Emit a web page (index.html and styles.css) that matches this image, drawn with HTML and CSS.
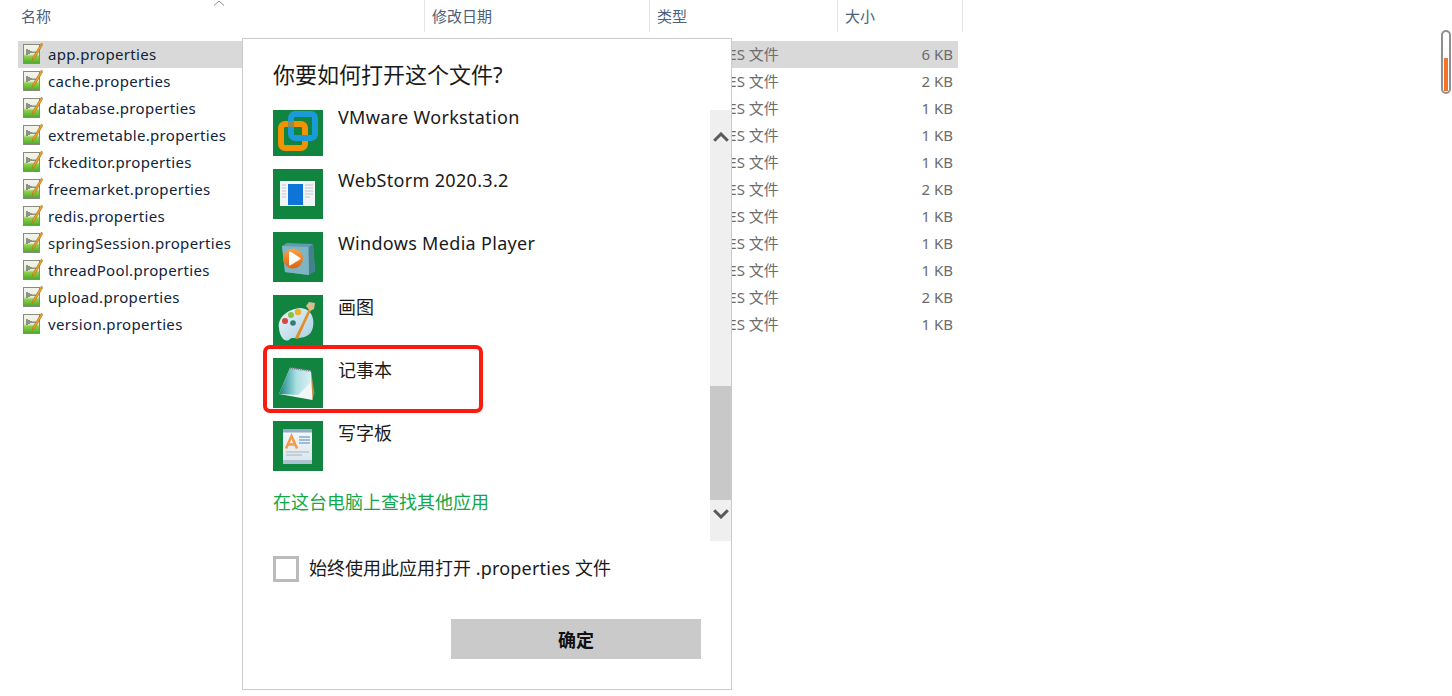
FILE: index.html
```html
<!DOCTYPE html>
<html lang="zh-CN">
<head>
<meta charset="utf-8">
<title>你要如何打开这个文件?</title>
<link rel="stylesheet" href="styles.css">
</head>
<body>
<svg class="defs" width="0" height="0" aria-hidden="true">
  <defs>
    <linearGradient id="pg" x1="0" y1="0" x2="0" y2="1">
      <stop offset="0" stop-color="#f4f4ee"/><stop offset=".5" stop-color="#e6efd8"/><stop offset=".62" stop-color="#8fd04a"/><stop offset="1" stop-color="#4aa82a"/>
    </linearGradient>
    <linearGradient id="note" x1="0" y1="0" x2="1" y2="0">
      <stop offset="0" stop-color="#1f7f80"/><stop offset=".3" stop-color="#62b8ba"/><stop offset=".55" stop-color="#aee0e4"/><stop offset="1" stop-color="#d6f0f3"/>
    </linearGradient>
    <linearGradient id="disc" x1="0" y1="0" x2="0" y2="1">
      <stop offset="0" stop-color="#f7a24a"/><stop offset="1" stop-color="#de6410"/>
    </linearGradient>
    <linearGradient id="pal" x1="0" y1="0" x2="1" y2="1">
      <stop offset="0" stop-color="#eaf5fa"/><stop offset="1" stop-color="#a8cfe2"/>
    </linearGradient>
    <linearGradient id="wp" x1="0" y1="0" x2="0" y2="1">
      <stop offset="0" stop-color="#f6f9fb"/><stop offset="1" stop-color="#d8e4ee"/>
    </linearGradient>
    <symbol id="file" viewBox="0 0 20 22">
      <rect x=".5" y="2.500" width="16" height="19" fill="url(#pg)" stroke="#8a8a80"/>
      <path d="M4 7v6M6 8v4M8 9v2M10 9.500v1.500M12 9.500v1.500" stroke="#333" stroke-width="1"/>
      <path d="M18.500 1 10 15l-1 3.500 2.800-2.200L19.800 2.500z" fill="#e9a32a" stroke="#a86d14" stroke-width=".6"/>
    </symbol>
  </defs>
</svg>

<main class="explorer">
  <div class="head">
    <div class="hcell hname">名称<span class="caret"><svg width="12" height="6" viewBox="0 0 12 6"><path d="M1 5.500 6 1l5 4.500" fill="none" stroke="#8a8a8a"/></svg></span></div>
    <div class="hcell hdate">修改日期</div>
    <div class="hcell htype">类型</div>
    <div class="hcell hsize">大小</div>
  </div>
  <div class="rows">
    <div class="row selected"><svg class="fi"><use href="#file"/></svg><span class="fname">app.properties</span><span class="ftype">PROPERTIES 文件</span><span class="fsize">6 KB</span></div>
    <div class="row"><svg class="fi"><use href="#file"/></svg><span class="fname">cache.properties</span><span class="ftype">PROPERTIES 文件</span><span class="fsize">2 KB</span></div>
    <div class="row"><svg class="fi"><use href="#file"/></svg><span class="fname">database.properties</span><span class="ftype">PROPERTIES 文件</span><span class="fsize">1 KB</span></div>
    <div class="row"><svg class="fi"><use href="#file"/></svg><span class="fname">extremetable.properties</span><span class="ftype">PROPERTIES 文件</span><span class="fsize">1 KB</span></div>
    <div class="row"><svg class="fi"><use href="#file"/></svg><span class="fname">fckeditor.properties</span><span class="ftype">PROPERTIES 文件</span><span class="fsize">1 KB</span></div>
    <div class="row"><svg class="fi"><use href="#file"/></svg><span class="fname">freemarket.properties</span><span class="ftype">PROPERTIES 文件</span><span class="fsize">2 KB</span></div>
    <div class="row"><svg class="fi"><use href="#file"/></svg><span class="fname">redis.properties</span><span class="ftype">PROPERTIES 文件</span><span class="fsize">1 KB</span></div>
    <div class="row"><svg class="fi"><use href="#file"/></svg><span class="fname">springSession.properties</span><span class="ftype">PROPERTIES 文件</span><span class="fsize">1 KB</span></div>
    <div class="row"><svg class="fi"><use href="#file"/></svg><span class="fname">threadPool.properties</span><span class="ftype">PROPERTIES 文件</span><span class="fsize">1 KB</span></div>
    <div class="row"><svg class="fi"><use href="#file"/></svg><span class="fname">upload.properties</span><span class="ftype">PROPERTIES 文件</span><span class="fsize">2 KB</span></div>
    <div class="row"><svg class="fi"><use href="#file"/></svg><span class="fname">version.properties</span><span class="ftype">PROPERTIES 文件</span><span class="fsize">1 KB</span></div>
  </div>
</main>

<section class="dialog">
  <h1 class="title">你要如何打开这个文件?</h1>
  <div class="chooser">
    <div class="apps">
      <div class="app first">
        <svg class="tile cut" viewBox="0 4 50 46"><rect width="50" height="50" fill="#118540"/>
          <rect x="8" y="18" width="24" height="24" rx="4" fill="none" stroke="#f39200" stroke-width="6"/>
          <rect x="18" y="8" width="24" height="24" rx="4" fill="none" stroke="#1a9ad6" stroke-width="6"/>
          <path d="M15 18h6" stroke="#8a8f5a" stroke-width="6"/></svg>
        <span class="aname wide">VMware Workstation</span>
      </div>
      <div class="app">
        <svg class="tile" viewBox="0 0 50 50"><rect width="50" height="50" fill="#118540"/>
          <rect x="7" y="12" width="35" height="25" fill="#f2f4f6"/>
          <rect x="15" y="15" width="15" height="21" fill="#0e74d8"/>
          <path d="M9 16h4M9 19h4M9 22h4M9 25h4M9 28h4M32 16h8M32 19h8M32 22h8M32 25h8M32 28h5" stroke="#c3c8cc"/></svg>
        <span class="aname wide">WebStorm 2020.3.2</span>
      </div>
      <div class="app">
        <svg class="tile" viewBox="0 0 50 50"><rect width="50" height="50" fill="#118540"/>
          <path d="M9 14 14 11l26 1 2 27-7 4-23-3z" fill="#5f9cad"/>
          <path d="M9 14l26 1 1 28-24-3z" fill="#7fb4c3"/>
          <path d="M36 15l4-3 2 27-6 4z" fill="#45808f"/>
          <circle cx="20" cy="26.500" r="10" fill="url(#disc)"/>
          <path d="M17 20.500 26.500 26.500 17 32.500z" fill="#fff" stroke="#fff" stroke-width="2" stroke-linejoin="round"/></svg>
        <span class="aname wide">Windows Media Player</span>
      </div>
      <div class="app">
        <svg class="tile" viewBox="0 0 50 50"><rect width="50" height="50" fill="#118540"/>
          <path d="M6 33C4 22 16 14 27 13c10 0 15 9 13 19-2 9-8 10-14 11-5 1-7-1-9 1-4 4-10 0-11-11z" fill="url(#pal)"/>
          <circle cx="12" cy="26" r="3" fill="#d8473a"/>
          <circle cx="18" cy="20" r="3" fill="#8cc04a"/>
          <circle cx="25" cy="17" r="3.200" fill="#eeb02e"/>
          <circle cx="20" cy="28" r="2.800" fill="#2f7f78"/>
          <path d="M22 43 36 14l2 1-13 29z" fill="#e88b22"/>
          <path d="M33 11l3-4 6 1-1 6-4 2z" fill="#d9bd8e"/></svg>
        <span class="aname cjk">画图</span>
      </div>
      <div class="app">
        <svg class="tile" viewBox="0 0 50 50"><rect width="50" height="50" fill="#118540"/>
          <path d="M38 13l3.500 22-2.500 7z" fill="#b98a42"/>
          <path d="M17 10l21 3 1.500 29L6 36z" fill="#f2f6f6"/>
          <path d="M17 10l21 3-1 12-12 12-19-1z" fill="url(#note)"/>
          <path d="M17 10l21 3" stroke="#7c8589" stroke-width="2" stroke-dasharray="1 1"/></svg>
        <span class="aname cjk">记事本</span>
      </div>
      <div class="app">
        <svg class="tile" viewBox="0 0 50 50"><rect width="50" height="50" fill="#118540"/>
          <rect x="10" y="8" width="29" height="35" rx="1" fill="url(#wp)"/>
          <rect x="10" y="8" width="29" height="3.500" fill="#8fadc8"/>
          <path d="M10 39h29v3a1 1 0 0 1-1 1H11a1 1 0 0 1-1-1z" fill="#aec2d4"/>
          <path d="M13 27.500 18.500 15 24 27.500M15 23.500h7" fill="none" stroke="#f49a44" stroke-width="2.500"/>
          <path d="M26 16h11M26 19h11M26 22h11" stroke="#82aad0" stroke-width="1.500"/>
          <path d="M13 31h23M13 34h16" stroke="#a9b2ba"/></svg>
        <span class="aname cjk">写字板</span>
      </div>
      <a class="more">在这台电脑上查找其他应用</a>
    </div>
    <div class="scrollbar">
      <div class="track">
        <svg class="arrow" width="16" height="10" viewBox="0 0 16 10"><path d="M1.200 8.800 8 2l6.800 6.800" fill="none" stroke="#5a5a5a" stroke-width="3"/></svg>
      </div>
      <div class="thumb"></div>
      <div class="track tail">
        <svg class="arrow" width="16" height="10" viewBox="0 0 16 10"><path d="M1.200 1.200 8 8l6.800-6.800" fill="none" stroke="#5a5a5a" stroke-width="3"/></svg>
      </div>
    </div>
  </div>
  <label class="always"><span class="box"></span><span class="always-text">始终使用此应用打开 <span class="ext">.properties</span> 文件</span></label>
  <div class="actions"><button class="ok" type="button">确定</button></div>
</section>

<div class="callout"></div>

<div class="meter"><span class="meter-fill"></span></div>
</body>
</html>
```
FILE: styles.css
```css
* { box-sizing: border-box; }
html, body { margin: 0; height: 100%; overflow: hidden; background: #fff; }
body { font-family: "Noto Sans", "Noto Sans CJK SC", sans-serif; color: #1a1a1a; }
.defs { position: absolute; }

.explorer { width: 963px; }
.head { display: flex; height: 32px; font-size: 15px; color: #4c607a; }
.hcell { position: relative; border-right: 1px solid #e5e5e5; line-height: 33px; padding-left: 7px; white-space: nowrap; }
.hname { width: 425px; padding-left: 21px; }
.hdate { width: 225px; }
.htype { width: 188px; }
.hsize { width: 125px; }
.caret { position: absolute; left: 213px; top: -3px; line-height: 0; }
.caret svg { display: block; margin-top: 3px; }

.rows { margin: 9px 0 0 18px; width: 940px; }
.row { display: flex; align-items: center; height: 27px; padding-bottom: 2px; font-size: 15px; white-space: nowrap; }
.row.selected { background: #d9d9d9; }
.fi { width: 20px; height: 22px; margin: 0 0 2px 5px; flex: none; }
.fname { width: 615px; padding-left: 5px; color: #10243a; letter-spacing: .33px; }
.ftype { width: 184px; color: #6d6d6d; }
.fsize { flex: 1; text-align: right; padding-right: 5px; color: #6d6d6d; }

.dialog { position: absolute; left: 242px; top: 38px; width: 490px; height: 652px; background: #fff; border: 1px solid #cacaca; padding-left: 30px; }
.title { margin: 0; height: 71px; padding-top: 19px; font-size: 22px; line-height: 32px; font-weight: 400; color: #1a1a1a; }
.chooser { display: flex; height: 431px; }
.apps { width: 437px; }
.app { display: flex; height: 63px; gap: 15px; }
.app.first { height: 59px; }
.tile { width: 50px; height: 50px; flex: none; display: block; }
.tile.cut { height: 46px; }
.aname { font-size: 18px; line-height: 22px; color: #1a1a1a; }
.first .aname { margin-top: -4px; }
.wide { letter-spacing: .32px; }
.cjk { padding-top: 1px; }
.more { display: block; margin-top: 5px; font-size: 18px; line-height: 26px; color: #10a84a; }

.scrollbar { width: 21px; display: flex; flex-direction: column; background: #efefef; }
.track { height: 276px; display: flex; justify-content: center; padding-top: 22px; flex: none; }
.thumb { height: 114px; background: #c8c8c8; flex: none; }
.tail { height: 41px; padding-top: 9px; }
.arrow { display: block; }

.always { display: flex; align-items: center; gap: 10px; margin-top: 15px; height: 26px; font-size: 18px; color: #1a1a1a; }
.always-text { margin-bottom: 4px; }
.ext { letter-spacing: .2px; }
.box { width: 26px; height: 26px; border: 3px solid #bbb; background: #fff; flex: none; }
.actions { display: flex; margin-top: 37px; padding-left: 178px; }
.ok { width: 250px; height: 40px; border: 0; padding: 0; background: #cacaca; font: 700 18px "Noto Sans", "Noto Sans CJK SC", sans-serif; color: #111; }

.callout { position: absolute; left: 263px; top: 345px; width: 220px; height: 68px; border: 4px solid #fb1a10; border-radius: 7px; pointer-events: none; }

.meter { position: absolute; left: 1441px; top: 30px; width: 10px; height: 64px; border: 2px solid #8f8f8f; border-radius: 5px; display: flex; align-items: flex-end; justify-content: center; background: #fff; }
.meter-fill { width: 4px; height: 33px; background: #f4732a; margin-bottom: 1px; }
```
